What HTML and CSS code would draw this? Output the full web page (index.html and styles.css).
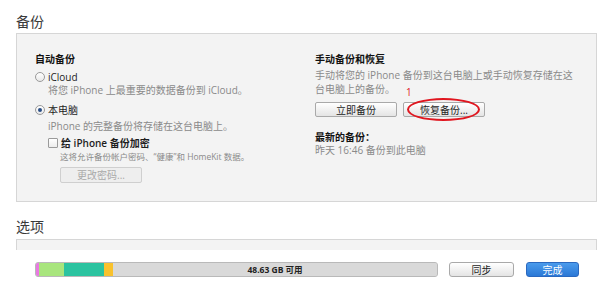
FILE: index.html
```html
<!DOCTYPE html>
<html lang="zh-CN">
<head>
<meta charset="utf-8">
<title>备份</title>
<link rel="stylesheet" href="styles.css">
</head>
<body>
<div class="content">
  <h2 class="section-title">备份</h2>
  <div class="panel backup">
    <div class="col col-left">
      <div class="heading">自动备份</div>
      <label class="radio-row r-icloud"><span class="radio"></span><span>iCloud</span></label>
      <div class="hint h-icloud">将您 iPhone 上最重要的数据备份到 iCloud。</div>
      <label class="radio-row r-pc"><span class="radio checked"></span><span>本电脑</span></label>
      <div class="hint h-pc">iPhone 的完整备份将存储在这台电脑上。</div>
      <div class="sub">
        <label class="check-row"><span class="checkbox"></span><span class="check-label">给 iPhone 备份加密</span></label>
        <div class="note">这将允许备份帐户密码、“健康”和 HomeKit 数据。</div>
        <button class="btn disabled">更改密码...</button>
      </div>
    </div>
    <div class="col col-right">
      <div class="heading">手动备份和恢复</div>
      <p class="hint desc">手动将您的 iPhone 备份到这台电脑上或手动恢复存储在这台电脑上的备份。</p>
      <div class="btn-row">
        <button class="btn">立即备份</button>
        <div class="restore-wrap">
          <span class="mark-num">1</span>
          <button class="btn">恢复备份...</button>
          <span class="mark-ellipse"></span>
        </div>
      </div>
      <div class="heading latest">最新的备份：</div>
      <div class="hint last">昨天 16:46 备份到此电脑</div>
    </div>
  </div>
  <h2 class="section-title second">选项</h2>
  <div class="panel options"></div>
</div>
<footer class="bottom-bar">
  <div class="storage">
    <span class="seg seg-pink"></span>
    <span class="seg seg-green"></span>
    <span class="seg seg-teal"></span>
    <span class="seg seg-yellow"></span>
    <span class="seg seg-free">48.63 GB 可用</span>
  </div>
  <button class="btn sync">同步</button>
  <button class="btn done">完成</button>
</footer>
</body>
</html>
```

FILE: styles.css
```css
html, body {
  margin: 0;
  padding: 0;
}
body {
  width: 600px;
  height: 289px;
  overflow: hidden;
  background: #ffffff;
  font-family: "Open Sans", "Noto Sans CJK SC", sans-serif;
  font-size: 10px;
  color: #1e1e1e;
}
.content {
  height: 250px;
  overflow: hidden;
  box-sizing: border-box;
  padding: 11px 3px 0 16px;
}
.section-title {
  margin: 0 0 2px;
  font-size: 14px;
  line-height: 20px;
  font-weight: normal;
  color: #3a3a3a;
  font-family: "Noto Sans CJK SC", sans-serif;
}
.section-title.second {
  margin-top: 14px;
  margin-bottom: 3px;
}
.panel {
  background: #f3f3f3;
  border: 1px solid #d6d6d6;
}
.panel.backup {
  display: flex;
  height: 169px;
  box-sizing: border-box;
  padding: 18px 0 0 18px;
}
.panel.options {
  height: 30px;
}
.col-left {
  width: 280px;
  flex: none;
}
.col-right {
  flex: 1;
}
.heading {
  font-weight: bold;
  line-height: 14px;
  color: #111;
}
.hint {
  color: #8a8a8a;
  line-height: 13px;
  margin: 0;
}
.radio-row {
  display: flex;
  align-items: center;
  gap: 3px;
  line-height: 14px;
  color: #1e1e1e;
}
.r-icloud { margin-top: 4px; }
.h-icloud { margin-left: 13px; }
.r-pc { margin-top: 6px; }
.h-pc { margin-left: 13px; margin-top: 3px; }
.radio {
  width: 8px;
  height: 8px;
  border-radius: 50%;
  border: 1px solid #9a9a9a;
  background: linear-gradient(#ffffff, #e9e9e9);
  position: relative;
  flex: none;
}
.radio.checked::after {
  content: "";
  position: absolute;
  left: 2px;
  top: 2px;
  width: 4px;
  height: 4px;
  border-radius: 50%;
  background: #2a4e86;
}
.sub {
  margin-left: 13px;
  margin-top: 3px;
}
.check-row {
  display: flex;
  align-items: center;
  gap: 3px;
  line-height: 14px;
}
.checkbox {
  width: 8px;
  height: 8px;
  border: 1px solid #9a9a9a;
  border-radius: 1px;
  background: linear-gradient(#ffffff, #ececec);
  flex: none;
}
.check-label {
  font-weight: 600;
  color: #1e1e1e;
}
.note {
  margin-left: 12px;
  margin-top: 1px;
  font-size: 8.5px;
  line-height: 12px;
  color: #8a8a8a;
}
.btn {
  font-family: "Open Sans", "Noto Sans CJK SC", sans-serif;
  font-size: 10px;
  line-height: 13px;
  height: 16px;
  padding: 0;
  border: 1px solid #a9a9a9;
  border-radius: 2px;
  background: linear-gradient(#ffffff, #e4e4e4);
  color: #1e1e1e;
  box-sizing: border-box;
  width: 82px;
}
.btn.disabled {
  margin-left: 12px;
  margin-top: 4px;
  background: #eeeeee;
  border-color: #cfcfcf;
  color: #a9a9a9;
  height: 16px;
}
.desc {
  margin-top: 2px;
  line-height: 14px;
  width: 262px;
}
.btn-row {
  display: flex;
  gap: 6px;
  margin-top: 6px;
}
.btn-row .btn {
  height: 15px;
  line-height: 12px;
}
.restore-wrap {
  position: relative;
}
.mark-num {
  position: absolute;
  left: 3px;
  top: -16px;
  color: #e0161f;
  font-size: 10px;
  line-height: 12px;
}
.mark-ellipse {
  position: absolute;
  left: 4px;
  top: -4px;
  width: 73px;
  height: 23px;
  border: 2px solid #e0161f;
  border-radius: 50%;
  box-sizing: border-box;
  pointer-events: none;
}
.latest {
  margin-top: 13px;
}
.last {
  line-height: 13px;
}
.bottom-bar {
  height: 39px;
  display: flex;
  align-items: center;
  padding-left: 35px;
  background: #ffffff;
}
.storage {
  width: 403px;
  height: 15px;
  box-sizing: border-box;
  border: 1px solid #b9b9b9;
  border-radius: 3px;
  display: flex;
  overflow: hidden;
  background: #d9d9d9;
}
.seg { display: block; height: 100%; }
.seg-pink { width: 3px; background: #e978e2; }
.seg-green { width: 25px; background: #a8e57d; }
.seg-teal { width: 40px; background: #2bc3a0; }
.seg-yellow { width: 9px; background: #f9c22d; }
.seg-free {
  flex: 1;
  background: #d9d9d9;
  font-size: 8.5px;
  font-weight: bold;
  line-height: 13px;
  text-align: center;
  color: #222;
}
.sync {
  width: 65px;
  height: 15px;
  line-height: 12px;
  margin-left: 11px;
  border-radius: 3px;
}
.done {
  width: 53px;
  height: 15px;
  line-height: 12px;
  margin-left: 12px;
  border-radius: 3px;
  border-color: #2a68bf;
  background: linear-gradient(#4a9bec, #2b78d6);
  color: #ffffff;
}
```
